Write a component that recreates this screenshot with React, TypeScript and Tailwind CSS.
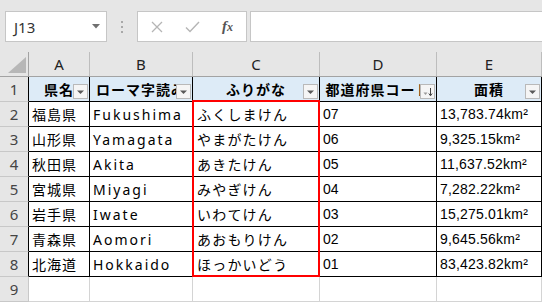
import React from "react";

const W = ["w-[29px]", "w-[61px]", "w-[103px]", "w-[127px]", "w-[117px]", "w-[105px]"];

const data: string[][] = [
  ["福島県", "Fukushima", "ふくしまけん", "07", "13,783.74km²"],
  ["山形県", "Yamagata", "やまがたけん", "06", "9,325.15km²"],
  ["秋田県", "Akita", "あきたけん", "05", "11,637.52km²"],
  ["宮城県", "Miyagi", "みやぎけん", "04", "7,282.22km²"],
  ["岩手県", "Iwate", "いわてけん", "03", "15,275.01km²"],
  ["青森県", "Aomori", "あおもりけん", "02", "9,645.56km²"],
  ["北海道", "Hokkaido", "ほっかいどう", "01", "83,423.82km²"],
];

const cellText = [
  "font-['Noto_Sans_CJK_JP',sans-serif] text-[14px] tracking-[1px] pl-[3px]",
  "font-['Noto_Sans',sans-serif] text-[14px] tracking-[2px] pl-[3px]",
  "font-['Noto_Sans_CJK_JP',sans-serif] text-[14px] tracking-[1.2px] pl-[4px]",
  "font-['Liberation_Sans',sans-serif] text-[14px] pl-[3px]",
  "font-['Liberation_Sans',sans-serif] text-[14px] tracking-[0.2px] pl-[3px]",
];

function FilterBtn({ sort }: { sort?: boolean }) {
  return (
    <div className="absolute right-[1px] bottom-[2px] w-[15px] h-[15px] bg-[#f5f5f5] border border-[#b9b9b9] flex items-center justify-center">
      {sort ? (
        <svg width="13" height="13" viewBox="0 0 13 13">
          <path d="M2.5 7.5 L6.5 7.5 L4.5 10 Z" fill="#9a9a9a" />
          <line x1="9.5" y1="3" x2="9.5" y2="10.5" stroke="#444" strokeWidth="1" />
          <path d="M7.8 8.5 L9.5 10.8 L11.2 8.5" fill="none" stroke="#444" strokeWidth="1" />
        </svg>
      ) : (
        <svg width="9" height="6" viewBox="0 0 9 6">
          <path d="M1 1.5 L8 1.5 L4.5 5 Z" fill="#595959" />
        </svg>
      )}
    </div>
  );
}

export default function App() {
  const headers = ["県名", "ローマ字読み", "ふりがな", "都道府県コード", "面積"];
  const letters = ["A", "B", "C", "D", "E"];
  return (
    <div className="relative w-[542px] h-[302px] overflow-hidden bg-[#e6e6e6] font-['Noto_Sans',sans-serif]">
      {/* toolbar */}
      <div className="h-[52px] pt-[11px] flex items-start">
        <div className="ml-[5px] w-[102px] h-[31px] bg-white border border-[#c6c6c6] flex items-center justify-between pl-[8px] pr-[6px]">
          <span className="text-[15px] text-[#333] font-['Noto_Sans',sans-serif] pt-[2px]">J13</span>
          <svg width="8" height="5" viewBox="0 0 8 5">
            <path d="M0 0 L8 0 L4 4.5 Z" fill="#707070" />
          </svg>
        </div>
        <div className="w-[30px] h-[31px] flex flex-col items-center justify-center gap-[3px]">
          <div className="w-[2px] h-[2px] bg-[#a8a8a8]" />
          <div className="w-[2px] h-[2px] bg-[#a8a8a8]" />
          <div className="w-[2px] h-[2px] bg-[#a8a8a8]" />
        </div>
        <div className="w-[110px] h-[31px] bg-white border border-[#c6c6c6] flex items-center">
          <svg className="ml-[13px]" width="12" height="12" viewBox="0 0 12 12">
            <path d="M1 1 L11 11 M11 1 L1 11" stroke="#b5b5b5" strokeWidth="1.3" />
          </svg>
          <svg className="ml-[22px]" width="15" height="12" viewBox="0 0 15 12">
            <path d="M1 6.5 L5 10.5 L14 1" fill="none" stroke="#b5b5b5" strokeWidth="1.4" />
          </svg>
          <span className="ml-[22px] text-[15px] italic font-bold font-['Liberation_Serif',serif] text-[#555] leading-none">
            f<span className="text-[12px]">x</span>
          </span>
        </div>
        <div className="ml-[3px] flex-1 h-[31px] bg-white border border-r-0 border-[#c6c6c6]" />
      </div>

      {/* column header */}
      <div className="flex h-[25px] border-b border-[#a3a3a3]">
        <div className={`${W[0]} h-full border-r border-[#a3a3a3] relative`}>
          <svg className="absolute left-0 top-0" width="28" height="24" viewBox="0 0 28 24">
            <path d="M26 5 L26 21 L8 21 Z" fill="#b7b7b7" />
          </svg>
        </div>
        {letters.map((l, i) => (
          <div
            key={l}
            className={`${W[i + 1]} h-full border-r border-[#bdbdbd] flex items-center justify-center text-[15px] text-[#222]`}
          >
            {l}
          </div>
        ))}
      </div>

      {/* row 1 headers */}
      <div className="flex h-[25px]">
        <div className={`${W[0]} h-full border-r border-b border-r-black border-b-[#c8c8c8] flex items-center justify-center text-[15px] text-[#444]`}>
          1
        </div>
        {headers.map((h, i) => (
          <div
            key={h}
            className={`${W[i + 1]} h-full relative overflow-hidden border-r border-b border-black bg-[#ddebf7] flex items-center justify-center whitespace-nowrap`}
          >
            <span className="font-['Noto_Sans_CJK_JP',sans-serif] font-bold text-[14px] tracking-[1px] text-black">{h}</span>
            <FilterBtn sort={i === 3} />
          </div>
        ))}
      </div>

      {/* data rows */}
      {data.map((row, r) => (
        <div key={r} className="flex h-[25px]">
          <div className={`${W[0]} h-full border-r border-b border-r-black border-b-[#c8c8c8] flex items-center justify-center text-[15px] text-[#444]`}>
            {r + 2}
          </div>
          {row.map((v, i) => (
            <div
              key={i}
              className={`${W[i + 1]} h-full overflow-hidden whitespace-nowrap border-r border-b border-black bg-white flex items-center text-black ${cellText[i]}`}
            >
              {v}
            </div>
          ))}
        </div>
      ))}

      {/* row 9 */}
      <div className="flex h-[25px]">
        <div className={`${W[0]} h-full border-r border-b border-[#c8c8c8] flex items-center justify-center text-[15px] text-[#444]`}>
          9
        </div>
        {[1, 2, 3, 4, 5].map((i) => (
          <div key={i} className={`${W[i]} h-full bg-white border-r border-b border-[#d4d4d4]`} />
        ))}
      </div>

      {/* red highlight */}
      <div className="absolute left-[192px] top-[100px] w-[128px] h-[177px] border-2 border-[#ff0000] pointer-events-none" />
    </div>
  );
}
